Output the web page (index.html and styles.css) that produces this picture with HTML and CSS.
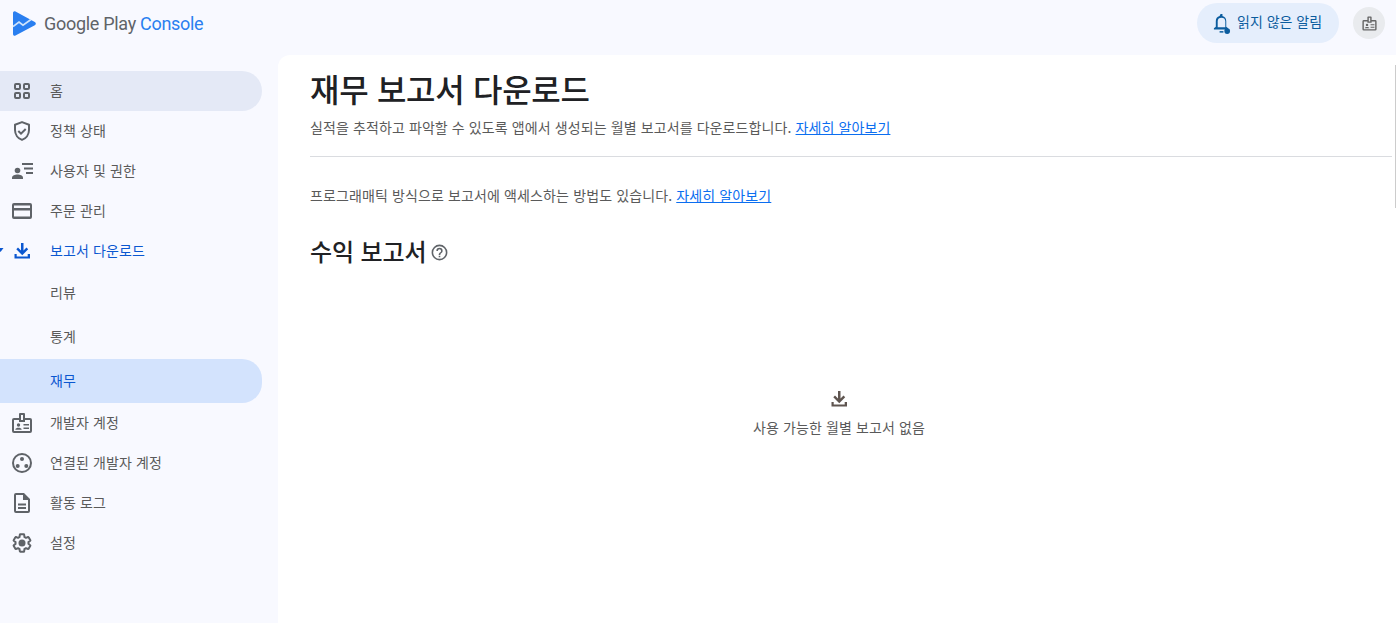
FILE: index.html
```html
<!DOCTYPE html>
<html lang="ko">
<head>
<meta charset="utf-8">
<title>Google Play Console</title>
<link rel="stylesheet" href="styles.css">
</head>
<body>
<div class="app">
  <header class="topbar">
    <div class="brand">
      <svg class="logo" viewBox="0 0 23 25"><path d="M0 2c0-1.500 1.300-2.300 2.500-1.600L21.800 11c1.400.8 1.400 2.400 0 3.200L2.500 24.600C1.300 25.300 0 24.500 0 23z" fill="#2a7ff0"/><path d="M0 15.500l6-4.500 4 3.200 8-5.700" fill="none" stroke="#cfe4fc" stroke-width="1.700"/></svg>
      <span class="brand-name">Google Play <span class="brand-accent">Console</span></span>
    </div>
    <div class="top-actions">
      <button class="alert-pill">
        <svg class="bell" viewBox="0 0 20 22"><path d="M9 1h2v2.200c2.600.6 4 2.700 4 5.300v6l2 1.500v1.200H2v-1.200L4 14.500v-6c0-2.600 1.400-4.700 4-5.300z M6 15h8V8.500C14 6.200 12.300 5 10 5S6 6.200 6 8.500z" fill="#0b5c9e" fill-rule="evenodd"/><rect x="8" y="19" width="4" height="1.600" fill="#0b5c9e"/><circle cx="16" cy="19" r="3" fill="#0b5c9e"/></svg>
        <span class="alert-label">읽지 않은 알림</span>
      </button>
      <div class="avatar">
        <svg viewBox="0 0 24 24" class="avatar-icon"><use href="#i-badge"/></svg>
      </div>
    </div>
  </header>
  <div class="body-row">
    <nav class="sidenav">
      <a class="nav-item home"><svg class="nav-icon" viewBox="0 0 24 24"><use href="#i-grid"/></svg><span>홈</span></a>
      <a class="nav-item"><svg class="nav-icon" viewBox="0 0 24 24"><use href="#i-shield"/></svg><span>정책 상태</span></a>
      <a class="nav-item"><svg class="nav-icon" viewBox="0 0 24 24"><use href="#i-users"/></svg><span>사용자 및 권한</span></a>
      <a class="nav-item"><svg class="nav-icon" viewBox="0 0 24 24"><use href="#i-card"/></svg><span>주문 관리</span></a>
      <a class="nav-item current"><svg class="caret" viewBox="0 0 6 4"><path d="M0 0h6L3 4z" fill="#0b57d0"/></svg><svg class="nav-icon" viewBox="0 0 24 24"><use href="#i-download"/></svg><span>보고서 다운로드</span></a>
      <a class="nav-sub"><span>리뷰</span></a>
      <a class="nav-sub"><span>통계</span></a>
      <a class="nav-sub selected"><span>재무</span></a>
      <a class="nav-item"><svg class="nav-icon" viewBox="0 0 24 24"><use href="#i-badge"/></svg><span>개발자 계정</span></a>
      <a class="nav-item"><svg class="nav-icon" viewBox="0 0 24 24"><use href="#i-linked"/></svg><span>연결된 개발자 계정</span></a>
      <a class="nav-item"><svg class="nav-icon" viewBox="0 0 24 24"><use href="#i-doc"/></svg><span>활동 로그</span></a>
      <a class="nav-item"><svg class="nav-icon" viewBox="0 0 24 24"><use href="#i-gear"/></svg><span>설정</span></a>
    </nav>
    <main class="content">
      <div class="scrollthumb"></div>
      <h1 class="page-title">재무 보고서 다운로드</h1>
      <p class="page-desc">실적을 추적하고 파악할 수 있도록 앱에서 생성되는 월별 보고서를 다운로드합니다. <a class="link">자세히 알아보기</a></p>
      <hr class="divider">
      <p class="access-note">프로그래매틱 방식으로 보고서에 액세스하는 방법도 있습니다. <a class="link">자세히 알아보기</a></p>
      <h2 class="section-title">수익 보고서 <svg class="help" viewBox="0 0 24 24"><path d="M12 2a10 10 0 1 0 0 20 10 10 0 0 0 0-20zm0 18a8 8 0 1 1 0-16 8 8 0 0 1 0 16zm-1-4h2v2h-2zm1-10a4 4 0 0 0-4 4h2a2 2 0 1 1 4 0c0 2-3 1.750-3 5h2c0-2.250 3-2.500 3-5a4 4 0 0 0-4-4z" fill="#5f6368"/></svg></h2>
      <div class="empty">
        <svg class="empty-icon" viewBox="0 0 24 24"><use href="#i-download"/></svg>
        <p class="empty-text">사용 가능한 월별 보고서 없음</p>
      </div>
    </main>
  </div>
</div>
<svg class="defs" aria-hidden="true">
  <symbol id="i-grid" viewBox="0 0 24 24"><g fill="none" stroke="currentColor" stroke-width="2"><rect x="5" y="5" width="5" height="5" rx="1"/><rect x="14" y="5" width="5" height="5" rx="1"/><rect x="5" y="14" width="5" height="5" rx="1"/><rect x="14" y="14" width="5" height="5" rx="1"/></g></symbol>
  <symbol id="i-shield" viewBox="0 0 24 24"><path fill="none" stroke="currentColor" stroke-width="2" stroke-linejoin="round" d="M12 3.100 5 5.700v5.400c0 4.400 2.900 8.400 7 9.800 4.100-1.400 7-5.400 7-9.800V5.700z"/><path fill="none" stroke="currentColor" stroke-width="2" d="m8.300 12 2.700 2.700 4.700-4.700"/></symbol>
  <symbol id="i-users" viewBox="0 0 24 24"><circle cx="7.500" cy="11.500" r="2.800" fill="currentColor"/><path fill="currentColor" d="M2 20v-1.300C2 16.500 5 15.500 7.500 15.500s5.500 1 5.500 3.200V20z"/><path fill="currentColor" d="M12 4h11v2H12zM14 8.500h9v2h-9zM16 13h7v2h-7z"/></symbol>
  <symbol id="i-card" viewBox="0 0 24 24"><path fill="currentColor" fill-rule="evenodd" d="M4 4h16a2 2 0 0 1 2 2v12a2 2 0 0 1-2 2H4a2 2 0 0 1-2-2V6a2 2 0 0 1 2-2zm0 2.500v2.500h16V6.500zm0 5v6h16v-6z"/></symbol>
  <symbol id="i-download" viewBox="0 0 24 24"><path fill="currentColor" d="M11 4h2.500v7.500l3-3 1.700 1.700-5.950 6-5.950-6 1.700-1.700 3 3zM4.500 15h2.200v2.500h11V15H20v4.500H4.500z"/></symbol>
  <symbol id="i-badge" viewBox="0 0 24 24"><path fill="currentColor" fill-rule="evenodd" d="M10 2h4a1 1 0 0 1 1 1v4h5a2 2 0 0 1 2 2v11a2 2 0 0 1-2 2H4a2 2 0 0 1-2-2V9a2 2 0 0 1 2-2h5V3a1 1 0 0 1 1-1zm1 2v5h2V4zM4 9v11h16V9h-5v2H9V9z"/><circle cx="8.500" cy="14" r="1.700" fill="currentColor"/><path fill="currentColor" d="M5.300 18.700c0-1.400 1.900-1.900 3.200-1.900s3.200.5 3.200 1.900zM13.500 13H19v1.500h-5.500zM13.500 16.500H19V18h-5.500z"/></symbol>
  <symbol id="i-linked" viewBox="0 0 24 24"><path fill="currentColor" fill-rule="evenodd" d="M12 2a10 10 0 1 1 0 20 10 10 0 0 1 0-20zm0 2a8 8 0 1 0 0 16 8 8 0 0 0 0-16z"/><circle cx="12" cy="8" r="2" fill="currentColor"/><circle cx="7.700" cy="15" r="2" fill="currentColor"/><circle cx="16.300" cy="15" r="2" fill="currentColor"/></symbol>
  <symbol id="i-doc" viewBox="0 0 24 24"><path fill="currentColor" fill-rule="evenodd" d="M14 2H6a2 2 0 0 0-2 2v16a2 2 0 0 0 2 2h12a2 2 0 0 0 2-2V8zM6 20V4h7v5h5v11z"/><path fill="currentColor" d="M8 12.500h8v2H8zM8 16h8v2H8z"/></symbol>
  <symbol id="i-gear" viewBox="0 0 24 24"><g transform="translate(1.200 1.200) scale(.9)"><path fill="none" stroke="currentColor" stroke-width="2.200" stroke-linejoin="round" d="M19.140 12.940c.04-.3.06-.61.06-.94 0-.32-.02-.64-.07-.94l2.030-1.580c.18-.14.23-.41.12-.61l-1.920-3.320c-.12-.22-.37-.29-.59-.22l-2.390.96c-.5-.38-1.030-.7-1.620-.94l-.36-2.540c-.04-.24-.24-.41-.48-.41h-3.840c-.24 0-.43.17-.47.41l-.36 2.540c-.59.24-1.130.57-1.620.94l-2.390-.96c-.22-.08-.47 0-.59.22L2.740 8.870c-.12.21-.08.47.12.61l2.030 1.580c-.05.3-.09.63-.09.94s.02.64.07.94l-2.030 1.580c-.18.14-.23.41-.12.61l1.920 3.320c.12.22.37.29.59.22l2.390-.96c.5.38 1.030.7 1.620.94l.36 2.540c.05.24.24.41.48.41h3.840c.24 0 .44-.17.47-.41l.36-2.540c.59-.24 1.130-.56 1.620-.94l2.390.96c.22.08.47 0 .59-.22l1.920-3.320c.12-.22.07-.47-.12-.61z"/></g><circle cx="12" cy="12" r="3.500" fill="currentColor"/></symbol>
</svg>
</body>
</html>
```
FILE: styles.css
```css
* { box-sizing: border-box; }
html, body { margin: 0; height: 100%; overflow: hidden; }
body {
  background: #f8f9ff;
  color: #5a5a5a;
  font-family: "Noto Sans CJK KR", "Noto Sans", sans-serif;
  font-size: 14px;
  letter-spacing: 0.1px;
}
.defs { display: none; }
.app { display: flex; flex-direction: column; height: 623px; }
.topbar {
  flex: 0 0 55px;
  display: flex;
  align-items: center;
  justify-content: space-between;
  padding: 0 11px 10px 13px;
}
.brand { display: flex; align-items: center; gap: 8px; margin-top: 1px; }
.logo { width: 23px; height: 25px; display: block; }
.brand-name { font-family: "Roboto", sans-serif; font-size: 18px; color: #5f6368; letter-spacing: -0.3px; }
.brand-accent { color: #2a7ff0; }
.top-actions { display: flex; align-items: center; gap: 14px; margin-top: 1px; }
.alert-pill {
  display: flex;
  align-items: center;
  gap: 6px;
  height: 40px;
  width: 142px;
  padding: 0 0 0 15px;
  border: 0;
  border-radius: 20px;
  background: #e5eefc;
  color: #0b5c9e;
  font: inherit;
  font-size: 14px;
}
.alert-label { margin-bottom: 4px; }
.bell { width: 19px; height: 21px; }
.avatar { width: 32px; height: 32px; border-radius: 50%; background: #e9ebee; display: flex; align-items: center; justify-content: center; color: #666; }
.avatar-icon { width: 17px; height: 17px; }
.body-row { flex: 1; display: flex; min-height: 0; }
.sidenav { flex: 0 0 278px; padding: 16px 16px 0 0; }
.nav-item, .nav-sub {
  position: relative;
  display: flex;
  align-items: center;
  height: 40px;
  padding-left: 10px;
  color: #5a5a5a;
  border-radius: 0 20px 20px 0;
}
.nav-item span, .nav-sub span { margin-bottom: 2px; }
.nav-sub { height: 44px; padding-left: 50px; }
.nav-icon { width: 24px; height: 24px; margin-right: 16px; color: #5f6368; flex: none; }
.home { background: #e4e9f6; }
.current, .current .nav-icon { color: #0b57d0; }
.selected { background: #d3e3fd; color: #0b57d0; }
.caret { position: absolute; left: -3px; top: 17px; width: 7px; height: 4px; }
.content {
  position: relative;
  flex: 1;
  background: #fff;
  border-top-left-radius: 12px;
  padding: 0 4px 0 32px;
  display: flex;
  flex-direction: column;
}
.scrollthumb { position: absolute; right: 0; top: 10px; width: 1px; height: 143px; background: #ccc; }
.page-title { margin: 10px 0 0; font-size: 32px; line-height: 46px; font-weight: 500; color: #202124; letter-spacing: -0.3px; }
.page-desc { margin: 5px 0 0; line-height: 22px; font-size: 14px; }
.link { color: #0b6ef0; text-decoration: underline; }
.divider { border: 0; border-top: 1px solid #dadce0; margin: 18px 0 0; width: 100%; }
.access-note { margin: 27px 0 0; line-height: 22px; letter-spacing: 0.12px; }
.section-title { margin: 29px 0 0; font-size: 24px; line-height: 32px; font-weight: 500; color: #202124; letter-spacing: -0.1px; display: flex; align-items: center; gap: 3px; }
.help { width: 19px; height: 19px; margin-top: 3px; }
.empty { margin: 120px 24px 0 0; display: flex; flex-direction: column; align-items: center; }
.empty-icon { width: 24px; height: 24px; color: #5f5550; }
.empty-text { margin: 6px 0 0; line-height: 20px; }
```
